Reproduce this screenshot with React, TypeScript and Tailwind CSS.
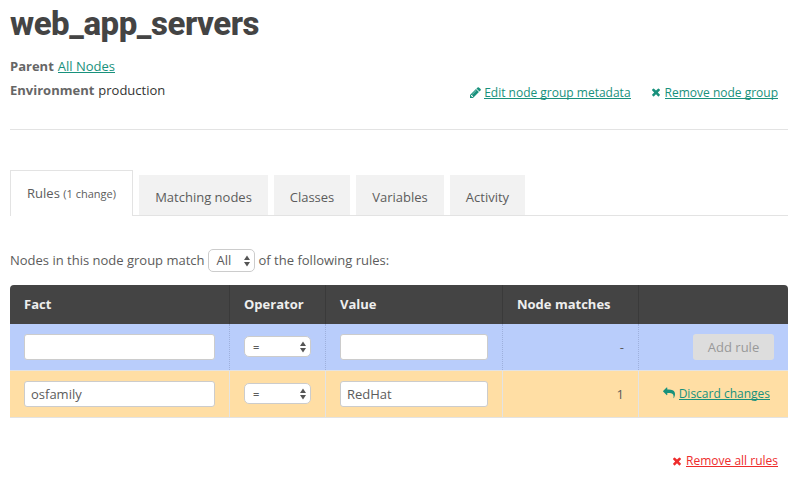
import type { ReactNode } from "react";

const PENCIL = "M363 1536l91-91-235-235-91 91v107h128v128h107zm523-928q0-22-22-22-10 0-17 7l-542 542q-7 7-7 17 0 22 22 22 10 0 17-7l542-542q7-7 7-17zm-54-192l416 416-832 832h-416v-416zm683 96q0 53-37 90l-166 166-416-416 166-165q36-38 90-38 53 0 91 38l235 234q37 39 37 91z";
const CROSS = "M1298 1322q0 40-28 68l-136 136q-28 28-68 28t-68-28l-294-294-294 294q-28 28-68 28t-68-28l-136-136q-28-28-28-68t28-68l294-294-294-294q-28-28-28-68t28-68l136-136q28-28 68-28t68 28l294 294 294-294q28-28 68-28t68 28l136 136q28 28 28 68t-28 68l-294 294 294 294q28 28 28 68z";
const REPLY = "M1792 1120q0 166-127 451-3 7-10.5 24t-13.5 30-13 22q-12 17-28 17-15 0-23.5-10t-8.5-25q0-9 2.500-26.500t2.500-23.500q5-68 5-123 0-101-17.500-181t-48.500-138.500-80-101-105.500-69.500-133-42.500-154-21.500-175.500-6h-224v256q0 26-19 45t-45 19-45-19l-512-512q-19-19-19-45t19-45l512-512q19-19 45-19t45 19 19 45v256h224q713 0 875 403 53 134 53 333z";

function Icon({ d, box, className }: { d: string; box: string; className: string }) {
  return (
    <svg viewBox={box} className={`shrink-0 fill-current ${className}`}>
      <path d={d} />
    </svg>
  );
}

function Link({ children, className = "" }: { children: ReactNode; className?: string }) {
  return (
    <a className={`h-[13px] border-b border-current leading-[14px] whitespace-nowrap ${className}`}>
      {children}
    </a>
  );
}

function Arrows() {
  return (
    <svg viewBox="0 0 6 12" className="h-3 w-1.5 shrink-0 fill-[#555]">
      <path d="M3 0.500L6 5H0zM3 11.500L6 7H0z" />
    </svg>
  );
}

function Field({ value, className }: { value: string; className: string }) {
  return (
    <div className={`flex h-[26px] items-center rounded-[3px] border border-[#ccc] bg-white px-1.5 ${className}`}>
      {value}
    </div>
  );
}

function OperatorSelect() {
  return (
    <div className="-mt-px flex h-[21px] w-[67px] items-center justify-between rounded-[5px] border border-[#ccc] bg-white pr-1 pl-2 text-[11px]">
      <span className="font-semibold">=</span>
      <Arrows />
    </div>
  );
}

const COLUMNS = "grid grid-cols-[220px_96px_177px_136px_149px]";

function Tab({ label, width }: { label: string; width: string }) {
  return (
    <div className={`flex h-10 items-center justify-center bg-[#f2f2f2] pt-1 ${width}`}>{label}</div>
  );
}

function Row({ fact, value, matches, tone, cell, action }: {
  fact: string; value: string; matches: string; tone: string; cell: string; action: ReactNode;
}) {
  const base = `flex items-center border-r px-[14px] ${cell}`;
  return (
    <div className={`${COLUMNS} h-[47px] border-b border-[#e3e3e3] ${tone}`}>
      <div className={base}><Field value={fact} className="w-[191px]" /></div>
      <div className={base}><OperatorSelect /></div>
      <div className={base}><Field value={value} className="w-[148px]" /></div>
      <div className={`${base} justify-end`}>{matches}</div>
      <div className="flex items-center justify-end pr-[14px]">{action}</div>
    </div>
  );
}

export default function App() {
  return (
    <main className="h-[483px] w-[800px] overflow-hidden bg-white pr-3 pl-2.5 font-['Open_Sans',sans-serif] text-[13px] leading-[18px] text-[#5c5c5c]">
      <h1 className="h-[57px] pt-[5px] font-['Roboto',sans-serif] text-[33px] leading-[38px] font-extrabold tracking-[-0.45px] text-[#444]">web_app_servers</h1>
      <div className="flex h-[72px] justify-between">
        <div>
          <p className="flex h-6 items-start gap-1">
            <b className="font-bold text-[#666]">Parent</b>
            <Link className="mt-[2px] h-[14px] text-[#18917c]">All Nodes</Link>
          </p>
          <p className="flex gap-1"><b className="text-[#666]">Environment</b><span className="text-[#333]">production</span></p>
        </div>
        <div className="flex items-start pt-[29px] pr-2.5 text-[12px] text-[#18917c]">
          <Icon d={PENCIL} box="0 0 1536 1792" className="mr-[3px] h-[13px] w-[11px]" />
          <Link>Edit node group metadata</Link>
          <Icon d={CROSS} box="0 0 1408 1792" className="mr-1 ml-5 h-[12px] w-[10px]" />
          <Link>Remove node group</Link>
        </div>
      </div>
      <hr className="border-[#e3e3e3]" />
      <nav className="mt-10 flex h-[46px] items-end border-b border-[#e3e3e3]">
        <div className="-mb-px flex h-[46px] w-[123px] items-center justify-center border border-b-0 border-[#e3e3e3] bg-white pb-px">
          Rules&nbsp;<span className="pt-0.5 text-[11px]">(1 change)</span>
        </div>
        <div className="ml-1.5 flex gap-1.5">
          <Tab label="Matching nodes" width="w-[129px]" />
          <Tab label="Classes" width="w-[76px]" />
          <Tab label="Variables" width="w-[88px]" />
          <Tab label="Activity" width="w-[75px]" />
        </div>
      </nav>
      <div className="mt-[33px] flex h-[23px] items-center gap-[3px]">
        <span className="-mt-0.5">Nodes in this node group match</span>
        <div className="flex h-[23px] w-[47px] items-center justify-between rounded-[5px] border border-[#ccc] pr-1 pl-2">
          <span className="-mt-0.5">All</span>
          <Arrows />
        </div>
        <span className="-mt-0.5 ml-px">of the following rules:</span>
      </div>
      <section className="mt-[13px] overflow-hidden rounded-t-[4px]">
        <div className={`${COLUMNS} h-[39px] bg-[#444] leading-[38px] font-bold text-[#eee]`}>
          <div className="border-r border-[#3a3a3a] pl-[14px]">Fact</div>
          <div className="border-r border-[#3a3a3a] pl-[14px]">Operator</div>
          <div className="border-r border-[#3a3a3a] pl-[14px]">Value</div>
          <div className="border-r border-[#3a3a3a] pl-[14px]">Node matches</div>
          <div />
        </div>
        <Row fact="" value="" matches="-" tone="bg-[#b9cdfb]" cell="border-dotted border-[#9eb0dc]"
          action={<button className="h-[26px] w-[81px] rounded-[3px] bg-[#ddd] text-[#999]">Add rule</button>} />
        <Row fact="osfamily" value="RedHat" matches="1" tone="bg-[#ffdea4]" cell="border-[#e3e3e3]"
          action={<span className="flex items-start pr-[4px] pb-0.5 text-[12px] text-[#18917c]"><Icon d={REPLY} box="0 0 1792 1792" className="mr-1 h-[12px] w-[12px]" /><Link>Discard changes</Link></span>} />
      </section>
      <div className="flex justify-end pt-[36px] pr-2.5 text-[12px] text-[#ee2c2c]">
        <Icon d={CROSS} box="0 0 1408 1792" className="mt-px mr-1 h-[12px] w-[10px]" />
        <Link>Remove all rules</Link>
      </div>
    </main>
  );
}
